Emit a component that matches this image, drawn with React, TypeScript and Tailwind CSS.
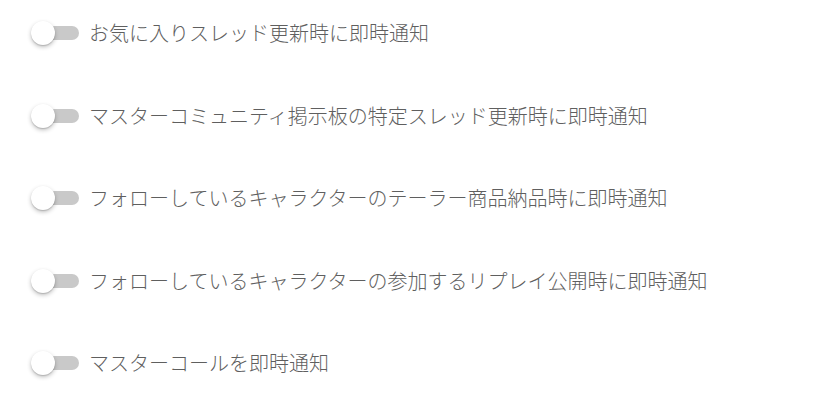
const items = [
  "お気に入りスレッド更新時に即時通知",
  "マスターコミュニティ掲示板の特定スレッド更新時に即時通知",
  "フォローしているキャラクターのテーラー商品納品時に即時通知",
  "フォローしているキャラクターの参加するリプレイ公開時に即時通知",
  "マスターコールを即時通知",
];

function Toggle() {
  return (
    <div className="relative h-[24px] w-[47px] shrink-0">
      <div className="absolute left-[9px] top-[5px] h-[14px] w-[38px] rounded-full bg-[#c9c9c9]" />
      <div className="absolute -left-[1px] top-0 size-[24px] rounded-full bg-white shadow-[0_2px_4px_rgba(0,0,0,0.25),0_1px_1px_rgba(0,0,0,0.14)]" />
    </div>
  );
}

export default function App() {
  return (
    <div
      className="min-h-screen bg-white pt-[13px] pl-[32px]"
      style={{ fontFamily: '"Noto Sans CJK JP", "Noto Sans", sans-serif' }}
    >
      <div className="flex flex-col gap-[42.5px]">
        {items.map((label) => (
          <div key={label} className="flex h-[40px] items-center">
            <Toggle />
            <span className="ml-[10px] text-[20px] font-light leading-none text-[#5f5f5f]">
              {label}
            </span>
          </div>
        ))}
      </div>
    </div>
  );
}
